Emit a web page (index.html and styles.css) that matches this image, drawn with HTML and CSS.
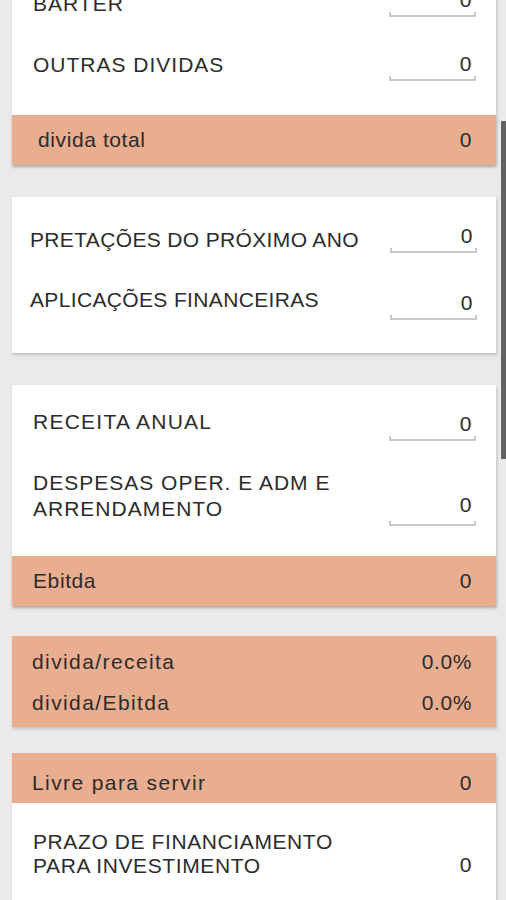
FILE: index.html
```html
<!DOCTYPE html>
<html lang="pt">
<head>
<meta charset="utf-8">
<title>Dívidas</title>
<link rel="stylesheet" href="styles.css">
</head>
<body>
<main class="page">
  <section class="card card-first">
    <div class="body body-first">
      <div class="row">
        <span class="label sp-wide">BARTER</span>
        <span class="field f-barter">0</span>
      </div>
      <div class="row">
        <span class="label sp-wide">OUTRAS DIVIDAS</span>
        <span class="field">0</span>
      </div>
    </div>
    <div class="summary summary-total">
      <span>divida total</span>
      <span>0</span>
    </div>
  </section>

  <section class="card">
    <div class="body body-second">
      <div class="row row-60">
        <span class="label sp-narrow">PRETAÇÕES DO PRÓXIMO ANO</span>
        <span class="field f-up">0</span>
      </div>
      <div class="row row-60">
        <span class="label sp-narrow">APLICAÇÕES FINANCEIRAS</span>
        <span class="field f-down">0</span>
      </div>
    </div>
  </section>

  <section class="card">
    <div class="body body-third">
      <div class="row">
        <span class="label sp-wider">RECEITA ANUAL</span>
        <span class="field f-small">0</span>
      </div>
      <div class="row row-tall">
        <span class="label sp-wide">DESPESAS OPER. E ADM E<br>ARRENDAMENTO</span>
        <span class="field field-tall">0</span>
      </div>
    </div>
    <div class="summary">
      <span>Ebitda</span>
      <span>0</span>
    </div>
  </section>

  <section class="card card-ratios">
    <div class="ratio">
      <span class="sp-loose">divida/receita</span>
      <span>0.0%</span>
    </div>
    <div class="ratio">
      <span class="sp-loose">divida/Ebitda</span>
      <span>0.0%</span>
    </div>
  </section>

  <section class="card card-last">
    <div class="summary summary-low">
      <span class="sp-loose">Livre para servir</span>
      <span>0</span>
    </div>
    <div class="body body-last">
      <div class="row row-plain">
        <span class="label label-tight">PRAZO DE FINANCIAMENTO<br>PARA INVESTIMENTO</span>
        <span class="value">0</span>
      </div>
    </div>
  </section>
</main>
<div class="scrollbar"></div>
</body>
</html>
```

FILE: styles.css
```css
html, body {
  margin: 0;
  padding: 0;
}

body {
  background: #eceae8;
  font-family: "Liberation Sans", Arial, sans-serif;
  font-size: 21px;
  letter-spacing: 0.6px;
  color: #2c2c2c;
  overflow: hidden;
  height: 900px;
}

.page {
  display: flex;
  flex-direction: column;
  padding: 0 10px 0 12px;
}

.card {
  background: #ffffff;
  box-shadow: 1px 2px 3px rgba(0, 0, 0, 0.18);
  margin-top: 32px;
}

.card-first {
  margin-top: -40px;
}

.card-ratios {
  margin-top: 30px;
  background: #e9ad8f;
  padding: 13px 24px 11px 20px;
  display: flex;
  flex-direction: column;
  gap: 15px;
}

.card-last {
  margin-top: 26px;
  padding-bottom: 60px;
}

.body {
  padding: 0 20px 0 21px;
}

.body-first {
  padding-top: 31px;
}

.body-second {
  padding: 30px 19px 6px 18px;
}

.body-third {
  padding-top: 24px;
}

.body-last {
  padding-top: 27px;
  padding-right: 24px;
}

.row {
  display: flex;
  justify-content: space-between;
  align-items: flex-start;
  height: 61px;
}

.row-60 {
  height: 60px;
}

.row-tall {
  height: 86px;
}

.row-plain {
  height: auto;
}

.label {
  line-height: 26px;
}

.label-tight {
  line-height: 24px;
}

.sp-narrow {
  letter-spacing: 0.35px;
}

.sp-wide {
  letter-spacing: 1px;
}

.sp-wider {
  letter-spacing: 1.25px;
}

.sp-loose {
  letter-spacing: 1.4px;
}

.value {
  line-height: 24px;
  margin-top: 23px;
}

.field {
  position: relative;
  box-sizing: border-box;
  width: 87px;
  text-align: right;
  padding: 0 4px 3px 0;
  line-height: 24px;
  border-bottom: 2px solid #c9c9c9;
  margin-top: 0;
}

.field::before,
.field::after {
  content: "";
  position: absolute;
  bottom: -2px;
  width: 2px;
  height: 5px;
  background: #c9c9c9;
}

.field::before {
  left: 0;
}

.field::after {
  right: 0;
}

.f-barter {
  margin-top: -3px;
}

.f-up {
  margin-top: -3px;
}

.f-down {
  margin-top: 4px;
}

.f-small {
  margin-top: 3px;
}

.field-tall {
  margin-top: 23px;
  padding-bottom: 7px;
}

.summary {
  background: #e9ad8f;
  height: 50px;
  display: flex;
  justify-content: space-between;
  align-items: center;
  padding: 0 24px 0 21px;
  box-shadow: 0 2px 3px rgba(0, 0, 0, 0.12);
}

.summary-total {
  margin-top: 2px;
  padding-left: 26px;
}

.summary-low {
  align-items: flex-start;
  padding: 17px 24px 0 20px;
  height: 50px;
  box-sizing: border-box;
  line-height: 26px;
  box-shadow: none;
}

.ratio {
  display: flex;
  justify-content: space-between;
  line-height: 26px;
}

.scrollbar {
  position: fixed;
  right: 0;
  top: 121px;
  width: 5px;
  height: 338px;
  background: #626262;
}
```
